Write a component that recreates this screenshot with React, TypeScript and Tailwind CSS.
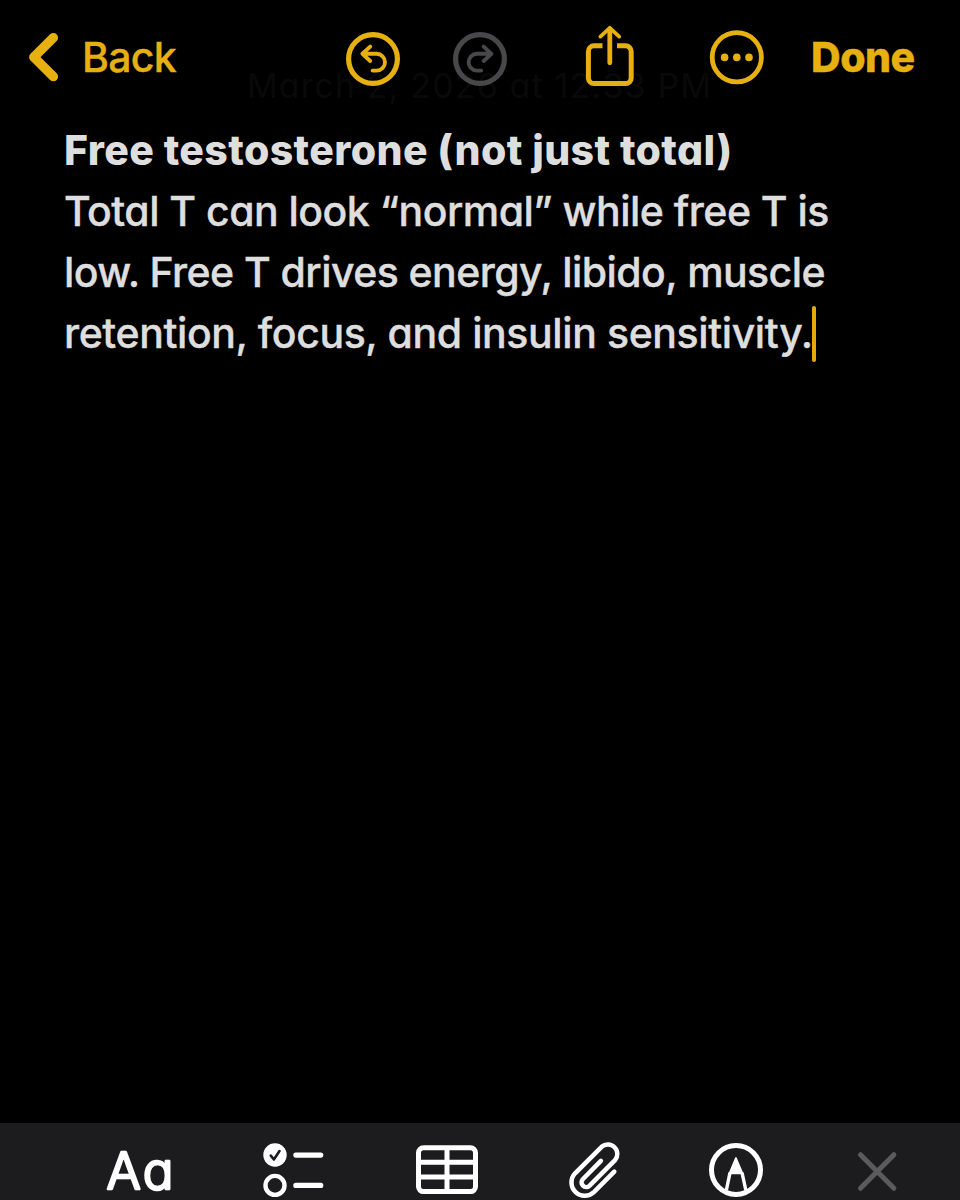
const dateStamp = "March 2, 2026 at 12:33 PM";

const bodyLines = [
  { text: "Total T can look “normal” while free T is", style: "tracking-[-0.52px]" },
  { text: "low. Free T drives energy, libido, muscle", style: "tracking-[-0.56px]" },
  { text: "retention, focus, and insulin sensitivity.", style: "tracking-[-0.4px]", caret: true },
];

function BackIcon() {
  return (
    <svg width="40" height="64" viewBox="0 0 40 64" fill="none" stroke="currentColor" strokeWidth="9.4" strokeLinecap="round" strokeLinejoin="round">
      <path d="M29.4 13.7 9.8 33.2l19.6 19.4" />
    </svg>
  );
}

function UndoIcon() {
  return (
    <svg width="64" height="64" viewBox="0 0 64 64" fill="none" stroke="currentColor" strokeLinecap="round" strokeLinejoin="round">
      <circle cx="32" cy="35" r="24.4" strokeWidth="5.2" />
      <path d="M29.2 22.6 21.4 29.8l7.8 7.2M21.4 29.8H35.6a8.4 8.4 0 0 1 0 16.8H31.6" strokeWidth="3.9" />
    </svg>
  );
}

function RedoIcon() {
  return (
    <svg width="64" height="64" viewBox="0 0 64 64" fill="none" stroke="currentColor" strokeLinecap="round" strokeLinejoin="round">
      <circle cx="32" cy="35" r="24.4" strokeWidth="5.2" />
      <path d="M35.7 22.6 43.4 29.8l-7.7 7.2M43.4 29.8H29a8.4 8.4 0 0 0 0 16.8H33.2" strokeWidth="3.9" />
    </svg>
  );
}

function ShareIcon() {
  return (
    <svg width="64" height="64" viewBox="0 0 64 64" fill="none" stroke="currentColor" strokeLinejoin="round">
      <path d="M24.5 21.8H16a5.6 5.6 0 0 0-5.6 5.6V54a5.6 5.6 0 0 0 5.6 5.6h31.6a5.6 5.6 0 0 0 5.6-5.6V27.4a5.6 5.6 0 0 0-5.6-5.6H39" strokeWidth="5" />
      <path d="M31.8 5v33.8" strokeWidth="4.8" strokeLinecap="round" />
      <path d="M22.4 12.6 31.8 3.8l9.4 8.8" strokeWidth="3.8" strokeLinecap="round" />
    </svg>
  );
}

function MoreIcon() {
  return (
    <svg width="64" height="64" viewBox="0 0 64 64" fill="currentColor">
      <circle cx="31.8" cy="33.3" r="24.6" fill="none" stroke="currentColor" strokeWidth="4.8" />
      <circle cx="19.6" cy="33.4" r="3.8" />
      <circle cx="31.8" cy="33.4" r="3.8" />
      <circle cx="44" cy="33.4" r="3.8" />
    </svg>
  );
}

function ChecklistIcon() {
  return (
    <svg width="64" height="77" viewBox="0 0 64 77" fill="none" stroke="currentColor" strokeLinecap="round" strokeLinejoin="round">
      <circle cx="14" cy="32" r="11.7" fill="currentColor" stroke="none" />
      <path d="m9.8 32.6 3.1 3.9 5.6-8.5" stroke="#1c1c1e" strokeWidth="2.6" />
      <circle cx="14" cy="62.4" r="9.5" strokeWidth="4.4" />
      <path d="M34.8 32.1H59.8M34.8 62.4H59.8" strokeWidth="5.1" />
    </svg>
  );
}

function TableIcon() {
  return (
    <svg width="64" height="77" viewBox="0 0 64 77" fill="none" stroke="currentColor" strokeWidth="5">
      <rect x="3.5" y="24.8" width="57" height="43.8" rx="5" />
      <path d="M32 25v43.5M4 39.3h56M4 54h56" />
    </svg>
  );
}

function PaperclipIcon() {
  return (
    <svg width="64" height="77" viewBox="0 0 64 77" fill="none" stroke="currentColor" strokeWidth="4.5" strokeLinecap="round">
      <path d="M52.3 48.7 31.9 69.1A13.3 13.3 0 0 1 13.1 50.3L39.6 23.8A9.5 9.5 0 0 1 53 37.2L27.4 62.8A4.67 4.67 0 0 1 20.8 56.2L38.9 37.9" />
    </svg>
  );
}

function MarkupIcon() {
  return (
    <svg width="64" height="77" viewBox="0 0 64 77" fill="none" stroke="currentColor">
      <circle cx="32" cy="47" r="24.5" strokeWidth="5" />
      <path d="M31.9 35 27 46.8 25.6 50.4H38.4L36.9 46.8Z" fill="currentColor" strokeWidth="1.8" strokeLinejoin="round" />
      <path d="M26 49.6 22.4 67M38 49.6 41.8 67" strokeWidth="3.4" />
    </svg>
  );
}

function CloseIcon() {
  return (
    <svg width="64" height="77" viewBox="0 0 64 77" fill="none" stroke="currentColor" strokeWidth="5" strokeLinecap="round">
      <path d="m15.5 31.7 33.4 33.6M48.9 31.7 15.5 65.3" />
    </svg>
  );
}

export default function App() {
  return (
    <div className="flex h-[1200px] w-[960px] flex-col overflow-hidden bg-black font-['Inter',sans-serif]">
      {/* Top bar */}
      <header className="relative flex h-[120px] items-start pt-6 text-[#e6b010]">
        {/* Date scrolled underneath the bar */}
        <span className="absolute left-[247px] top-[66px] whitespace-nowrap text-[34px] leading-[40px] tracking-[1.15px] text-[#090909] [font-feature-settings:'cv11']">
          {dateStamp}
        </span>
        <button className="relative ml-6 flex w-[317px]">
          <BackIcon />
          <span className="ml-[18px] text-[41px] font-medium leading-[66px] tracking-[-0.7px] [-webkit-text-stroke:0.4px]">
            Back
          </span>
        </button>
        <button className="relative">
          <UndoIcon />
        </button>
        <button className="relative ml-[43px] text-[#48484a]">
          <RedoIcon />
        </button>
        <button className="relative ml-[66px]">
          <ShareIcon />
        </button>
        <button className="relative ml-[63px]">
          <MoreIcon />
        </button>
        <button className="ml-[42px] text-[41px] font-extrabold leading-[66px] tracking-[-0.5px] [-webkit-text-stroke:0.4px]">
          Done
        </button>
      </header>

      {/* Note */}
      <main className="flex-1 pl-16 text-[41px] leading-[61px] text-[#dedede] [font-feature-settings:'cv11']">
        <h1 className="whitespace-nowrap font-extrabold tracking-[0.4px]">Free testosterone (not just total)</h1>
        {bodyLines.map((line) => (
          <p key={line.text} className="flex items-center whitespace-nowrap font-medium [-webkit-text-stroke:0.4px]">
            <span className={line.style}>{line.text}</span>
            {line.caret && (
              <span className="-ml-px h-[56px] w-[4.5px] rounded-full bg-[#e6a90c]" />
            )}
          </p>
        ))}
      </main>

      {/* Format bar */}
      <footer className="flex h-[77px] items-start bg-[#1c1c1e] text-white">
        <button className="ml-[106px] w-[68px]">
          <svg width="68" height="77" viewBox="0 0 68 77" fill="currentColor" className="overflow-visible">
            <text
              x="0.5"
              y="65.7"
              className="text-[51px] font-light [font-feature-settings:'cv11']"
              stroke="currentColor"
              strokeWidth="2.5"
              strokeLinejoin="round"
              letterSpacing="2.2"
            >
              Aa
            </text>
          </svg>
        </button>
        <button className="ml-[87px]">
          <ChecklistIcon />
        </button>
        <button className="ml-[90px]">
          <TableIcon />
        </button>
        <button className="ml-[83px]">
          <PaperclipIcon />
        </button>
        <button className="ml-[78px]">
          <MarkupIcon />
        </button>
        <button className="ml-[77px] text-[#5b5b5e]">
          <CloseIcon />
        </button>
      </footer>
    </div>
  );
}
